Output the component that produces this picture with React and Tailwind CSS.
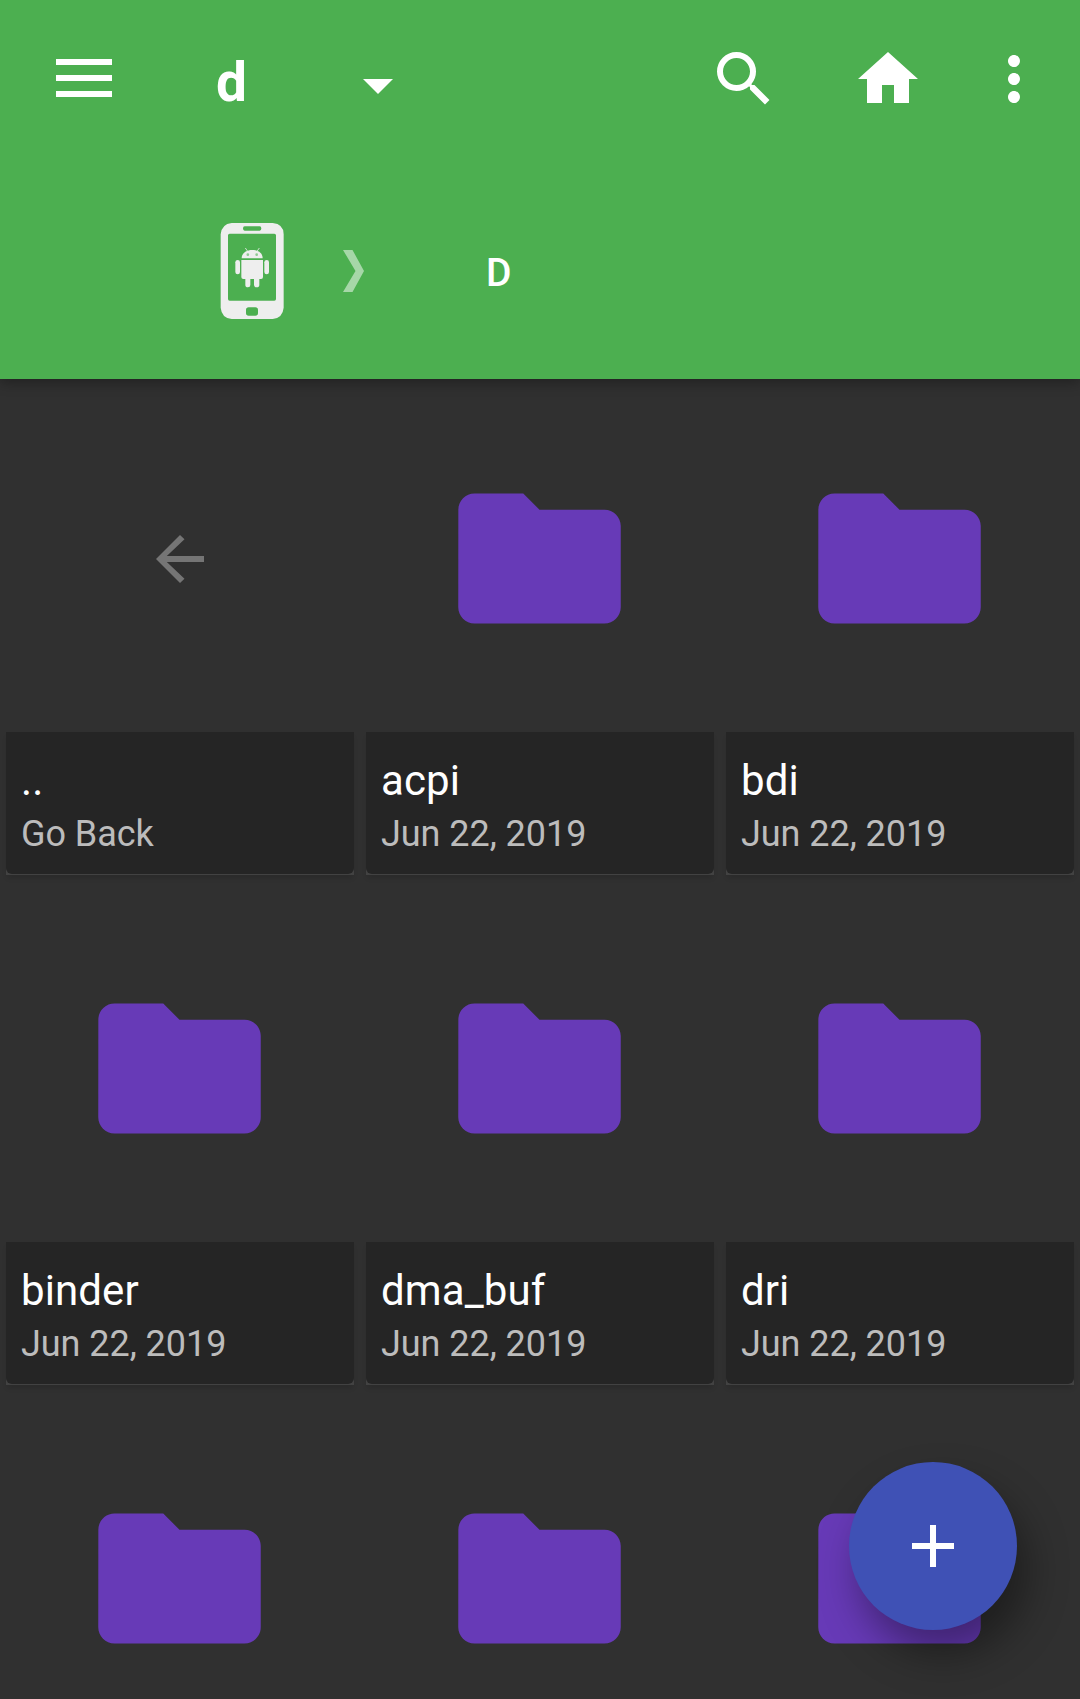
const rows = [
  [
    { name: "..", detail: "Go Back", back: true },
    { name: "acpi", detail: "Jun 22, 2019" },
    { name: "bdi", detail: "Jun 22, 2019" },
  ],
  [
    { name: "binder", detail: "Jun 22, 2019" },
    { name: "dma_buf", detail: "Jun 22, 2019" },
    { name: "dri", detail: "Jun 22, 2019" },
  ],
  [{}, {}, {}],
];

function Icon({ d, className }) {
  return (
    <svg viewBox="0 0 24 24" fill="currentColor" className={className}>
      <path d={d} />
    </svg>
  );
}

function PhoneIcon() {
  return (
    <svg viewBox="60 66 192 294" className="h-[98px] w-16 shrink-0">
      <path
        fill="#eeeeee"
        fillRule="evenodd"
        d="M95 69H218Q251 72 251 103V323Q248 354 218 357H95Q65 354 62 323V103Q65 72 95 69ZM134 79Q129 79 129 85.500Q129 92 134 92H179Q184 92 184 85.500Q184 79 179 79ZM89 101Q84 101 84 106V297Q84 302 89 302H223Q228 302 228 297V106Q228 101 223 101ZM146 322Q138 322 138 330V339Q138 347 146 347H166Q174 347 174 339V330Q174 322 166 322Z"
      />
      <g fill="#eeeeee">
        <path d="M125 175C125 159 139 150 156.500 150S188 159 188 175Z" />
        <path d="M124 180H189V231Q189 237 183 237H178V255Q178 262 170 262Q162 262 162 255V237H151V255Q151 262 144 262Q136 262 136 255V237H130Q124 237 124 231Z" />
        <rect x="106" y="180" width="14" height="43" rx="7" />
        <rect x="193" y="180" width="14" height="43" rx="7" />
      </g>
      <path d="M136 144L143 154M178 144L171 154" stroke="#eeeeee" strokeWidth="3" opacity=".8" />
      <circle cx="143.500" cy="164" r="4" fill="#8fca92" />
      <circle cx="170" cy="164" r="4" fill="#8fca92" />
    </svg>
  );
}

function Tile({ item }) {
  return (
    <div className="flex h-[490px] flex-col">
      <div className="flex h-[347px] items-center justify-center">
        {item.back ? (
          <Icon
            className="size-[72px] text-[#757575]"
            d="M20 11H7.600l5.900-5.600L12 4l-8 8 8 8 1.500-1.400L7.600 13H20z"
          />
        ) : (
          <Icon
            className="mr-px size-[195px] text-[#673ab7]"
            d="M10 4H4c-1.100 0-1.990.9-1.990 2L2 18c0 1.100.9 2 2 2h16c1.100 0 2-.9 2-2V8c0-1.100-.9-2-2-2h-8z"
          />
        )}
      </div>
      {item.name && (
        <div className="h-[143px] bg-[#424242] pb-px shadow-[0_4px_5px_-1px_rgba(0,0,0,0.12)]">
          <div className="h-full rounded-b-[6px] bg-[#252525] pl-[15px] pt-[24px]">
            <div className="text-[42px] leading-[50px] tracking-[0.1px] text-white">{item.name}</div>
            <div className="mt-[7px] text-[36px] leading-[42px] tracking-[-0.05px] text-[#bcbcbc]">{item.detail}</div>
          </div>
        </div>
      )}
    </div>
  );
}

export default function App() {
  return (
    <div className="relative flex h-[1699px] w-[1080px] flex-col overflow-hidden bg-[#303030] font-['Roboto',sans-serif]">
      <header className="z-10 h-[379px] shrink-0 bg-[#4caf50] text-white shadow-[0_4px_12px_rgba(0,0,0,0.3)]">
        <div className="flex h-[158px] items-center pl-[56px] pr-[30px]">
          <button className="mb-[2px] flex w-14 flex-col gap-[10px]">
            <span className="h-[6px] bg-white" />
            <span className="h-[6px] bg-white" />
            <span className="h-[6px] bg-white" />
          </button>
          <h1 className="ml-[104px] mt-[5px] w-[126px] text-[55px] font-bold leading-[64px]">d</h1>
          <Icon className="mt-[11px] size-[72px] shrink-0" d="M7 10l5 5 5-5z" />
          <div className="ml-auto flex items-center">
            <Icon
              className="size-[72px]"
              d="M15.500 14h-.79l-.28-.27A6.471 6.471 0 0 0 16 9.500 6.500 6.500 0 1 0 9.500 16c1.610 0 3.090-.59 4.230-1.570l.27.28v.79l5 4.990L20.490 19zm-6 0C7.010 14 5 11.990 5 9.500S7.010 5 9.500 5 14 7.010 14 9.500 11.990 14 9.500 14z"
            />
            <Icon className="ml-[72px] size-[72px]" d="M10 20v-6h4v6h5v-8h3L12 3 2 12h3v8z" />
            <Icon
              className="ml-[54px] size-[72px]"
              d="M12 8c1.100 0 2-.9 2-2s-.9-2-2-2-2 .9-2 2 .9 2 2 2zm0 2c-1.100 0-2 .9-2 2s.9 2 2 2 2-.9 2-2-.9-2-2-2zm0 6c-1.100 0-2 .9-2 2s.9 2 2 2 2-.9 2-2-.9-2-2-2z"
            />
          </div>
        </div>
        <nav className="flex h-[226px] items-center pl-[220px]">
          <PhoneIcon />
          <svg viewBox="0 0 21 42" className="ml-[59px] h-[42px] w-[21px]">
            <path d="M0 0H9.500L21 21L9.500 42H0L12.500 21Z" fill="#a6d7a8" />
          </svg>
          <span className="ml-[122px] mt-[4px] text-[39px] font-medium leading-[46px]">D</span>
        </nav>
      </header>
      <main className="flex flex-col gap-5 px-[6px] pt-[6px]">
        {rows.map((row, r) => (
          <div key={r} className="grid grid-cols-3 gap-3">
            {row.map((item, c) => (
              <Tile key={c} item={item} />
            ))}
          </div>
        ))}
      </main>
      <button className="absolute bottom-[69px] right-[63px] z-20 flex size-[168px] items-center justify-center rounded-full bg-[#3f51b5] text-white shadow-[10px_24px_40px_rgba(0,0,0,0.38)]">
        <Icon className="size-[72px]" d="M19 13h-6v6h-2v-6H5v-2h6V5h2v6h6z" />
      </button>
    </div>
  );
}
